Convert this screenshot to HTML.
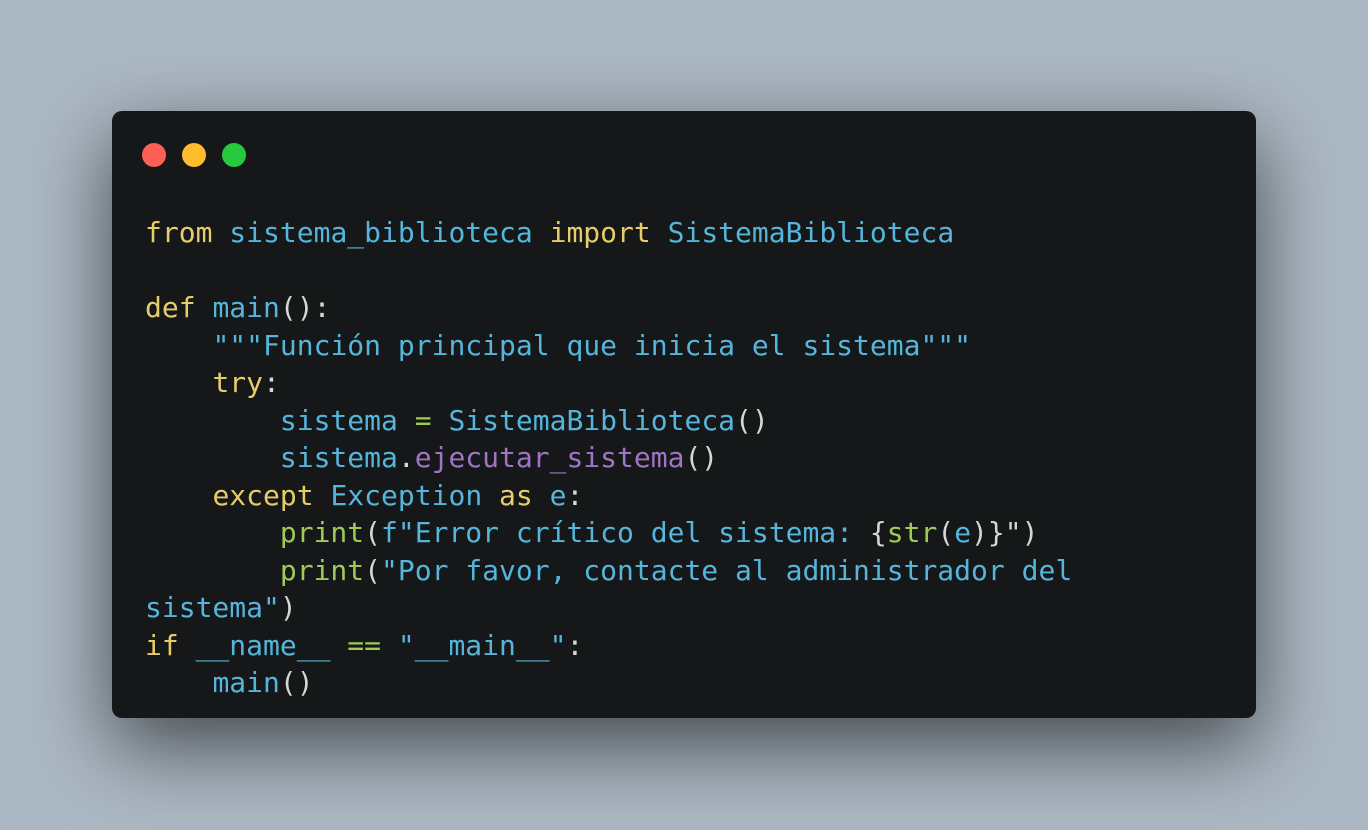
<!DOCTYPE html>
<html><head><meta charset="utf-8"><style>
html,body{margin:0;padding:0;}
body{width:1368px;height:830px;background:#abb7c2;position:relative;overflow:hidden;}
.card{position:absolute;left:112px;top:111px;width:1144px;height:607px;background:#151718;border-radius:10px;box-shadow:0 28px 80px rgba(0,0,0,0.6);}
.dot{position:absolute;top:143px;width:24px;height:24px;border-radius:50%;}
pre{position:absolute;left:145px;top:214px;margin:0;font-family:"DejaVu Sans Mono","Liberation Mono",monospace;font-size:28px;line-height:37.5px;color:#d4d7d6;white-space:pre;}
.k{color:#e6cd69}.b{color:#55b5db}.p{color:#a074c4}.g{color:#9fca56}.w{color:#d4d7d6}
</style></head><body>
<div class="card"></div>
<div class="dot" style="left:142px;background:#ff5f56"></div>
<div class="dot" style="left:182px;background:#ffbd2e"></div>
<div class="dot" style="left:222px;background:#27c93f"></div>
<pre><span class="k">from</span> <span class="b">sistema_biblioteca</span> <span class="k">import</span> <span class="b">SistemaBiblioteca</span>

<span class="k">def</span> <span class="b">main</span><span class="w">():</span>
    <span class="b">"""Función principal que inicia el sistema"""</span>
    <span class="k">try</span><span class="w">:</span>
        <span class="b">sistema</span> <span class="g">=</span> <span class="b">SistemaBiblioteca</span><span class="w">()</span>
        <span class="b">sistema</span><span class="w">.</span><span class="p">ejecutar_sistema</span><span class="w">()</span>
    <span class="k">except</span> <span class="b">Exception</span> <span class="k">as</span> <span class="b">e</span><span class="w">:</span>
        <span class="g">print</span><span class="w">(</span><span class="b">f"Error crítico del sistema: </span><span class="w">{</span><span class="g">str</span><span class="w">(</span><span class="b">e</span><span class="w">)}")</span>
        <span class="g">print</span><span class="w">(</span><span class="b">"Por favor, contacte al administrador del</span>
<span class="b">sistema"</span><span class="w">)</span>
<span class="k">if</span> <span class="b">__name__</span> <span class="g">==</span> <span class="b">"__main__"</span><span class="w">:</span>
    <span class="b">main</span><span class="w">()</span></pre>
</body></html>
